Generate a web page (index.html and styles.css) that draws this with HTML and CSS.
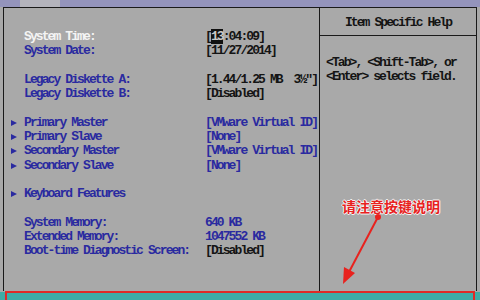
FILE: index.html
```html
<!DOCTYPE html>
<html lang="en">
<head>
    <meta charset="UTF-8">
    <meta name="viewport" content="width=device-width, initial-scale=1.0">
    <title>BIOS Setup - Main</title>
    <link rel="stylesheet" href="styles.css">
</head>
<body>
    <div class="topbar">
        <span class="tab"></span>
    </div>
    <div class="panel">
        <div class="items">
            <div class="row selected"><span class="label">System Time:</span><span class="value">[<span class="cursor">13</span>:04:09]</span></div>
            <div class="row"><span class="label">System Date:</span><span class="value">[11/27/2014]</span></div>
            <div class="row blank"></div>
            <div class="row"><span class="label">Legacy Diskette A:</span><span class="value">[1.44/1.25 MB&nbsp;&nbsp;3½"]</span></div>
            <div class="row"><span class="label">Legacy Diskette B:</span><span class="value">[Disabled]</span></div>
            <div class="row blank"></div>
            <div class="row sub"><span class="label">Primary Master</span><span class="value blue">[VMware Virtual ID]</span></div>
            <div class="row sub"><span class="label">Primary Slave</span><span class="value blue">[None]</span></div>
            <div class="row sub"><span class="label">Secondary Master</span><span class="value blue">[VMware Virtual ID]</span></div>
            <div class="row sub"><span class="label">Secondary Slave</span><span class="value blue">[None]</span></div>
            <div class="row blank"></div>
            <div class="row sub"><span class="label">Keyboard Features</span></div>
            <div class="row blank"></div>
            <div class="row"><span class="label">System Memory:</span><span class="value blue">640 KB</span></div>
            <div class="row"><span class="label">Extended Memory:</span><span class="value blue">1047552 KB</span></div>
            <div class="row"><span class="label">Boot-time Diagnostic Screen:</span><span class="value">[Disabled]</span></div>
        </div>
        <div class="help">
            <div class="help-title">Item Specific Help</div>
            <div class="help-body">
                <p>&lt;Tab&gt;, &lt;Shift-Tab&gt;, or</p>
                <p>&lt;Enter&gt; selects field.</p>
            </div>
        </div>
    </div>
    <div class="keybar"></div>

    <!-- annotation drawn over the screenshot -->
    <div class="note">请注意按键说明</div>
    <svg class="arrow" width="60" height="80" viewBox="0 0 60 80">
        <circle cx="38" cy="5" r="3" fill="#e8221e"/>
        <line x1="38" y1="5" x2="9" y2="60" stroke="#e8221e" stroke-width="2"/>
        <polygon points="3,72 4,55 15,61" fill="#e8221e"/>
    </svg>
    <div class="mark"></div>
</body>
</html>
```

FILE: styles.css
```css
body {
    margin: 0;
    width: 480px;
    height: 300px;
    overflow: hidden;
    background-color: #a9a9a9;
    font-family: "Liberation Mono", "DejaVu Sans Mono", monospace;
    font-size: 13px;
    font-weight: bold;
    letter-spacing: -1.9px;
    position: relative;
}
.topbar {
    height: 7px;
    background-color: #9494bc;
}
.tab {
    display: block;
    width: 40px;
    height: 7px;
    margin-left: 20px;
    background-color: #b4b4bc;
}
.panel {
    display: grid;
    grid-template-columns: 316px 1fr;
    height: 283px;
    margin: 0 3px;
    border: 1px solid #1a1a1a;
    border-bottom: none;
}
.items {
    padding-top: 22px;
    border-right: 1px solid #1a1a1a;
}
.row {
    display: grid;
    grid-template-columns: 181px auto;
    height: 14.3px;
    line-height: 14.3px;
    padding-left: 20px;
    color: #2a2aa0;
    position: relative;
}
.row.selected {
    color: #f4f4f4;
}
.row.sub::before {
    content: "";
    position: absolute;
    left: 7px;
    top: 4px;
    border-left: 6px solid #2a2aa0;
    border-top: 3.5px solid transparent;
    border-bottom: 3.5px solid transparent;
}
.value {
    color: #141414;
    white-space: pre;
}
.value.blue {
    color: #2a2aa0;
}
.cursor {
    background-color: #101010;
    color: #c8c8c8;
}
.help {
    color: #141414;
}
.help-title {
    height: 27px;
    line-height: 29px;
    text-align: center;
    border-bottom: 1px solid #1a1a1a;
}
.help-body {
    padding: 20px 0 0 6px;
}
.help-body p {
    margin: 0;
    line-height: 14.3px;
}
.keybar {
    height: 9px;
    margin-top: 1px;
    background-color: #3eaca6;
}
.note {
    position: absolute;
    left: 342px;
    top: 196px;
    font-family: "Noto Sans CJK SC", sans-serif;
    font-size: 14px;
    letter-spacing: 0;
    color: #e8221e;
    text-shadow: 1px 0 #f4f4f4, -1px 0 #f4f4f4, 0 1px #f4f4f4, 0 -1px #f4f4f4;
}
.arrow {
    position: absolute;
    left: 340px;
    top: 212px;
}
.mark {
    position: absolute;
    left: 5px;
    top: 291px;
    width: 466px;
    height: 20px;
    border: 2px solid #e02a26;
}
```
